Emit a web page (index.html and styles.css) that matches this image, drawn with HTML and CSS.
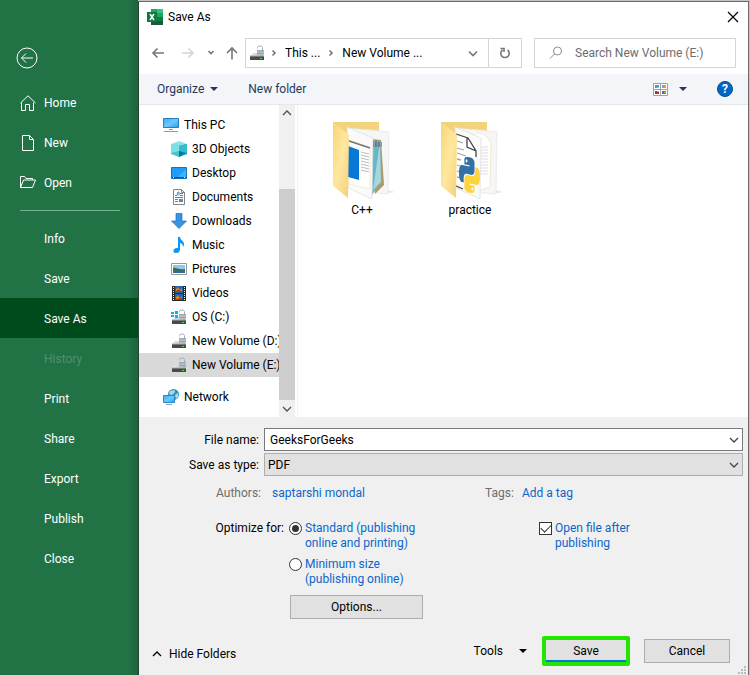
FILE: index.html
```html
<!DOCTYPE html>
<html lang="en">
<head>
<meta charset="utf-8">
<title>Save As</title>
<link rel="stylesheet" href="styles.css">
</head>
<body>
<svg class="defs" aria-hidden="true">
  <defs>
    <linearGradient id="screen" x1="0" y1="0" x2="1" y2="1"><stop offset="0" stop-color="#3fa9f5"/><stop offset=".5" stop-color="#6cc8ff"/><stop offset="1" stop-color="#2d9cf0"/></linearGradient>
    <linearGradient id="flap" x1="0" y1="0" x2="1" y2="1"><stop offset="0" stop-color="#f6d775"/><stop offset=".5" stop-color="#ffe79f"/><stop offset="1" stop-color="#f3d077"/></linearGradient>
    <linearGradient id="metal" x1="0" y1="0" x2="1" y2="0"><stop offset="0" stop-color="#eeeeee"/><stop offset="1" stop-color="#b5b8ba"/></linearGradient>
    <symbol id="drive" viewBox="0 0 16 16">
      <path d="M3.500 8h10l1.500 3.500H1z" fill="url(#metal)"/>
      <path d="M1 11h14v4H1z" fill="#4a4a4a"/><path d="M1 10.500h14v1H1z" fill="#a8a8a8"/>
      <path d="M11 13h2v1h-2z" fill="#35e04a"/>
      <path d="M8.500 3.500V2.500q0-1.500 2.500-1.500t2.500 1.500V5" fill="none" stroke="#a5afb5"/>
      <path d="M8 5h7v4.500H8z" fill="#9daab2"/><path d="M8 6.500h7v1H8z" fill="#c4ced3"/>
    </symbol>
    <symbol id="chevron" viewBox="0 0 10 10"><path d="M1 3l4 4 4-4" fill="none" stroke="currentColor" stroke-width="1.300"/></symbol>
    <symbol id="folder-back" viewBox="0 0 64 80">
      <path d="M52 74l13-2-8-2z" fill="#e8e8e8"/>
      <path d="M3 2h46v60H3z" fill="#f3d27c"/>
      <path d="M34 9l14 1v3l-14 4z" fill="#ffe9b0"/>
      <path d="M20 8l39 4-1 62-23-2z" fill="#f6f6f6" stroke="#e0e0e0" stroke-width=".6"/>
    </symbol>
    <path id="snake" d="M14.250.18l.9.2.73.26.59.3.45.32.34.34.25.34.16.33.1.3.04.26.02.2-.01.13V8.500l-.05.63-.13.55-.21.46-.26.38-.3.31-.33.25-.35.19-.35.14-.33.1-.3.07-.26.04-.21.02H8.770l-.69.05-.59.14-.5.22-.41.27-.33.32-.27.35-.2.36-.15.37-.1.35-.07.32-.04.27-.02.21v3.060H3.170l-.21-.03-.28-.07-.32-.12-.35-.18-.36-.26-.36-.36-.35-.46-.32-.59-.28-.73-.21-.88-.14-1.050-.05-1.230.06-1.220.16-1.040.24-.87.32-.71.36-.57.4-.44.42-.33.42-.24.4-.16.36-.1.32-.05.24-.01h.16l.06.01h8.160v-.83H6.180l-.01-2.750-.02-.37.05-.34.11-.31.17-.28.25-.26.31-.23.38-.2.44-.18.51-.15.58-.12.64-.1.71-.06.77-.04.84-.02 1.270.05zm-6.300 1.980l-.23.33-.08.41.08.41.23.34.33.22.41.09.41-.09.33-.22.23-.34.08-.41-.08-.41-.23-.33-.33-.22-.41-.09-.41.09z"/>
  </defs>
</svg>
<div class="app">
  <nav class="sidebar" aria-label="File">
    <button class="back" type="button" aria-label="Back"><svg width="22" height="22" viewBox="0 0 22 22"><circle cx="11" cy="11" r="10"/><path d="M17 11H5.500M10 6.500L5.500 11l4.500 4.500"/></svg></button>
    <a class="side-item" href="#"><svg width="16" height="16" viewBox="0 0 16 16"><path d="M.5 8L8 .8 15.500 8M1.500 7.500v8h4v-6h4v6h4v-8"/></svg>Home</a>
    <a class="side-item" href="#"><svg width="16" height="16" viewBox="0 0 16 16"><path d="M2.500.5h7l4 4v11h-11zM9.500.5v4h4"/></svg>New</a>
    <a class="side-item" href="#"><svg width="16" height="16" viewBox="0 0 16 16"><path d="M.5 12.500v-11h4l1.500 2h6.500V5M.5 12.500l3-7.500h12l-3 7.500z"/></svg>Open</a>
    <hr class="side-rule">
    <a class="side-item" href="#">Info</a>
    <a class="side-item" href="#">Save</a>
    <a class="side-item active" href="#">Save As</a>
    <a class="side-item disabled" aria-disabled="true">History</a>
    <a class="side-item" href="#">Print</a>
    <a class="side-item" href="#">Share</a>
    <a class="side-item" href="#">Export</a>
    <a class="side-item" href="#">Publish</a>
    <a class="side-item" href="#">Close</a>
  </nav>

  <main class="dialog">
    <header class="titlebar">
      <svg width="16" height="16" viewBox="0 0 16 16"><path d="M4 0h6v4H4z" fill="#21a366"/><path d="M10 0h6v4h-6z" fill="#33c481"/><path d="M4 4h6v4H4z" fill="#107c41"/><path d="M10 4h6v4h-6z" fill="#21a366"/><path d="M4 8h6v8H4z" fill="#185c37"/><path d="M10 8h6v4h-6z" fill="#107c41"/><path d="M10 12h6v4h-6z" fill="#185c37"/><path d="M0 3h10v10H0z" fill="#0b7a3e"/><path d="M3 5l4 6M7 5l-4 6" stroke="#fff" stroke-width="1.500"/></svg>
      <span>Save As</span>
      <button class="close" type="button" aria-label="Close"><svg width="12" height="12" viewBox="0 0 12 12"><path d="M1 1l10 10M11 1L1 11" stroke="#000" stroke-width="1.200"/></svg></button>
    </header>

    <div class="navbar">
      <button class="nav-btn" type="button" aria-label="Back"><svg width="14" height="14" viewBox="0 0 14 14"><path d="M13 7H2M6.500 2.500L2 7l4.500 4.500"/></svg></button>
      <button class="nav-btn faded" type="button" aria-label="Forward"><svg width="14" height="14" viewBox="0 0 14 14"><path d="M1 7h11M7.500 2.500L12 7l-4.500 4.500"/></svg></button>
      <button class="nav-btn small" type="button" aria-label="Recent"><svg width="8" height="14" viewBox="0 0 8 14"><path d="M1.500 5l2.500 2.500L6.500 5"/></svg></button>
      <button class="nav-btn" type="button" aria-label="Up"><svg width="14" height="14" viewBox="0 0 14 14"><path d="M7 13.500V2M2 7l5-5 5 5"/></svg></button>
      <div class="address">
        <svg width="16" height="16"><use href="#drive"/></svg>
        <svg class="crumb-arrow" width="6" height="8" viewBox="0 0 6 8"><path d="M1.500 1.500L4 4 1.500 6.500"/></svg>
        <span class="crumb-pc">This ...</span>
        <svg class="crumb-arrow" width="6" height="8" viewBox="0 0 6 8"><path d="M1.500 1.500L4 4 1.500 6.500"/></svg>
        <span>New Volume ...</span>
        <button class="address-drop" type="button" aria-label="Previous locations"><svg width="10" height="10" viewBox="0 0 10 10"><path d="M1 3.500l4 4 4-4"/></svg></button>
        <button class="refresh" type="button" aria-label="Refresh"><svg width="12" height="12" viewBox="0 0 12 12"><path d="M8.500 3a4.200 4.200 0 1 1-5 0M1.500 1.500h3.500v3.500"/></svg></button>
      </div>
      <label class="search"><svg width="14" height="14" viewBox="0 0 14 14"><circle cx="8.500" cy="5" r="4"/><path d="M5.500 8L1 12.500"/></svg><input type="search" aria-label="Search" placeholder="Search New Volume (E:)"></label>
    </div>

    <div class="toolbar">
      <button type="button">Organize <i class="caret"></i></button>
      <button type="button">New folder</button>
      <button class="view" type="button" aria-label="Change your view"><svg width="15" height="13" viewBox="0 0 15 13"><path d="M.5.5h14v12H.5zM7.500.5v12M.5 6.500h14" fill="#fff" stroke="#a0a0a0"/><path d="M2 2h4v3H2z" fill="#4999d2"/><path d="M9 2h4v3H9z" fill="#79a5c9"/><path d="M2 8h4v3H2z" fill="#b42d20"/><path d="M9 8h4v3H9z" fill="#337ab4"/><path d="M4 4h2v1H4zM11 3h2v1h-2zM4 8h2v1H4zM11 9h2v1h-2z" fill="#d8b640"/></svg><i class="caret"></i></button>
      <button class="help" type="button" aria-label="Help">?</button>
    </div>

    <div class="browser">
      <div class="tree">
        <a class="node root" href="#"><svg width="16" height="16" viewBox="0 0 16 16"><path d="M.5 1.500h15v9H.5z" fill="url(#screen)" stroke="#287eb8"/><path d="M6 12h4v1H6zM1 14h14v1H1z" fill="#8999a8"/></svg>This PC</a>
        <a class="node" href="#"><svg width="16" height="16" viewBox="0 0 16 16"><path d="M0 3l8-3 8 3-8 3z" fill="#8be3ea"/><path d="M0 3l8 2v11l-8-3z" fill="#44c3d0"/><path d="M16 3L8 5v11l8-3z" fill="#0795b5"/><path d="M0 3l8 2v5l-8 2z" fill="#7edfe6"/><path d="M8 5l8-2v9l-8-2z" fill="#35bccd"/><path d="M8 10l5 2-5 4z" fill="#077493"/></svg>3D Objects</a>
        <a class="node" href="#"><svg width="16" height="16" viewBox="0 0 16 16"><path d="M.5 2.500h15v11H.5z" fill="#1e9cfb" stroke="#1574b5"/><path d="M7 12l8-8v8z" fill="#44b0ff"/><path d="M1 12h14v1H1z" fill="#164e7a"/><path d="M2 12h1v1H2zM13 12h1v1h-1z" fill="#fff"/></svg>Desktop</a>
        <a class="node" href="#"><svg width="16" height="16" viewBox="0 0 16 16"><path d="M2.500.5h8l3 3v12h-11z" fill="#fff" stroke="#858585"/><path d="M10.500.5v3h3" fill="none" stroke="#858585"/><path d="M4 6.500h2L7 3h1v3.500M9 4.500h3M9 6.500h3M4 8.500h8M4 10.500h3M4 12.500h3" fill="none" stroke="#398ac8"/><path d="M8 10h4v3H8z" fill="#4a91b9"/></svg>Documents</a>
        <a class="node" href="#"><svg width="16" height="16" viewBox="0 0 16 16"><path d="M5 .5h6V8h4.500L8 15.500.5 8H5z" fill="#3793e5" stroke="#246eaf" stroke-width=".7"/></svg>Downloads</a>
        <a class="node" href="#"><svg width="16" height="16" viewBox="0 0 16 16"><path d="M7 0h2c0 3 4 4 4 7 0 2-1 3-1 3 0-3-2-4-3-4v6.500C9 15 7 16 5 16c-4 0-3-5 1-5h1z" fill="#0796f5"/></svg>Music</a>
        <a class="node" href="#"><svg width="16" height="16" viewBox="0 0 16 16"><path d="M.5 2.500h15v11H.5z" fill="#fff" stroke="#999"/><path d="M2 4h12v8H2z" fill="#8cc9ef"/><path d="M2 7c3-1 5 2 12 1v2H2z" fill="#37705a"/><path d="M2 10h12v2H2z" fill="#316c9d"/></svg>Pictures</a>
        <a class="node" href="#"><svg width="16" height="16" viewBox="0 0 16 16"><path d="M1 1h14v15H1z" fill="#282828"/><path d="M4 1h8v7H4zM4 9h8v6H4z" fill="#2464a8"/><path d="M5 4l2-2 2 3 2-2v3H5zM5 12l2-2 2 3 2-2v3H5z" fill="#d6841f"/><path d="M6 5h3v1H6zM8 13h3v1H8z" fill="#ad2c29"/><path d="M2.500 2v14M13.500 2v14" stroke="#eee" stroke-dasharray="1 1"/></svg>Videos</a>
        <a class="node" href="#"><svg width="16" height="16" viewBox="0 0 16 16"><use href="#drive" width="16" height="16"/><path d="M0 3h3v2H0zM4 2h3v3H4zM0 6h3v2H0zM4 6h3v3H4z" fill="#00b3f5"/></svg>OS (C:)</a>
        <a class="node" href="#"><svg width="16" height="16"><use href="#drive"/></svg>New Volume (D:)</a>
        <a class="node selected" href="#"><svg width="16" height="16"><use href="#drive"/></svg>New Volume (E:)</a>
        <a class="node root network" href="#"><svg width="16" height="16" viewBox="0 0 16 16"><circle cx="10.500" cy="5.500" r="5.500" fill="#3c91b8"/><path d="M7 2l4-1 1 2-3 3-3-1zM12 6l3-2v4l-2 2z" fill="#a9dce8"/><path d="M.5 6.500h11v7H.5z" fill="url(#screen)" stroke="#238bc6"/><path d="M3 15h6v1H3z" fill="#8aa5b5"/></svg>Network</a>
      </div>
      <div class="scrollbar">
        <button class="flip" type="button" aria-label="Scroll up"><svg width="10" height="10"><use href="#chevron"/></svg></button>
        <div class="track"><div class="thumb"></div></div>
        <button type="button" aria-label="Scroll down"><svg width="10" height="10"><use href="#chevron"/></svg></button>
      </div>
      <div class="files">
        <button class="file" type="button">
          <svg width="64" height="80" viewBox="0 0 64 80"><use href="#folder-back" width="64" height="80"/><path d="M42 19l9 1 3 45-9 9z" fill="#b49865"/><path d="M41 22l9-2 1 42-9 13z" fill="#66b7c7"/><path d="M50 22l-7 48 8-8z" fill="#a6d7dc"/><path d="M42 21l10 1v5H42z" fill="#84a5ae"/><path d="M43 21v6M46 21v6M49 22v5" stroke="#425d68"/><path d="M17 7l26 11-1 61-24-11z" fill="#fafafa" stroke="#ddd" stroke-width=".7"/><path d="M19 20l21 7v42l-21-5z" fill="#fff" stroke="#f3ddb0" stroke-width=".6"/><path d="M19 21l21 7" stroke="#777" stroke-width="1.500"/><path d="M18 26l11 4v30l-11-3z" fill="#0878d5"/><path d="M31 32l8 2M31 35l8 2M31 38l8 2M31 41l8 2M31 44l8 2M31 47l8 2M31 50l8 2" stroke="#aaa" stroke-width=".8"/><path d="M3 2l16 13-1 63L3 66z" fill="url(#flap)"/></svg>
          <span>C++</span>
        </button>
        <button class="file" type="button">
          <svg width="64" height="80" viewBox="0 0 64 80"><use href="#folder-back" width="64" height="80"/><path d="M38 13l8 1 7 8-1 45-12 4" fill="#fff" stroke="#f0dfb5" stroke-width=".7"/><path d="M43 27h7M43 30h7M43 33h7M43 36h7M43 39h7M43 42h7M43 45h7M43 48h7M43 51h7M43 54h7" stroke="#ddd"/><path d="M17 7l26 11-1 61-24-11z" fill="#fafafa" stroke="#ddd" stroke-width=".7"/><path d="M18 14l14 4 6 12v40l-20-6" fill="#fff"/><path d="M18 14l12 4 8 13v6M29 18v9l9 4M18 66l7 3" fill="none" stroke="#454545" stroke-width="1.300"/><path d="M19 21l6 2M19 28l7 2M19 33l9 3M19 39l4 1M19 45l3 1M19 51l3 1M19 57l4 1" stroke="#a5a5a5" stroke-width="1.300"/><g transform="translate(21 35) scale(.87 1.480) skewY(7)"><use href="#snake" fill="#3471a3"/><use href="#snake" fill="#ffd33d" transform="rotate(180 12 12)"/></g><path d="M3 2l16 13-1 63L3 66z" fill="url(#flap)"/></svg>
          <span>practice</span>
        </button>
      </div>
    </div>

    <form class="panel">
      <div class="fields">
        <label for="name">File name:</label>
        <div class="combo"><input id="name" type="text" value="GeeksForGeeks"><svg width="10" height="10"><use href="#chevron"/></svg></div>
        <label for="type">Save as type:</label>
        <div class="combo"><select id="type"><option>PDF</option></select><svg width="10" height="10"><use href="#chevron"/></svg></div>
      </div>
      <div class="meta">
        <span class="meta-label">Authors:</span><a href="#">saptarshi mondal</a>
        <span class="meta-label">Tags:</span><a href="#">Add a tag</a>
      </div>
      <div class="options">
        <span class="options-label">Optimize for:</span>
        <div class="choices">
          <label class="choice"><input type="radio" name="optimize" checked><span>Standard (publishing<br>online and printing)</span></label>
          <label class="choice"><input type="radio" name="optimize"><span>Minimum size<br>(publishing online)</span></label>
          <button class="button" type="button">Options...</button>
        </div>
        <label class="choice after"><input type="checkbox" checked><span>Open file after<br>publishing</span></label>
      </div>
      <div class="footer">
        <button class="hide" type="button"><svg width="10" height="10"><use href="#chevron"/></svg>Hide Folders</button>
        <button class="tools" type="button">Tools <i class="caret"></i></button>
        <button class="button save" type="button">Save</button>
        <button class="button cancel" type="button">Cancel</button>
      </div>
      <svg class="grip" width="8" height="8" viewBox="0 0 8 8"><path d="M6 0h2v2H6zM3 3h2v2H3zM6 3h2v2H6zM0 6h2v2H0zM3 6h2v2H3zM6 6h2v2H6z" fill="#bbb"/></svg>
    </form>
  </main>
</div>
</body>
</html>
```
FILE: styles.css
```css
* { box-sizing: border-box; }

body {
  margin: 0;
  background: #c3c3c3;
  color: #000;
  font: 12px/16px Roboto, "Open Sans", sans-serif;
}

button, input, select { font: inherit; color: inherit; }
button { padding: 0; border: 0; background: none; }
a { color: inherit; text-decoration: none; }
svg { display: block; flex: none; }
.defs { position: absolute; width: 0; height: 0; }

.app {
  display: grid;
  grid-template-columns: 138px 1fr;
  min-height: 100vh;
  padding-right: 1px;
}

/* Green file menu */
.sidebar {
  padding-top: 47px;
  background: linear-gradient(to right, transparent 92%, #0002) #217346;
  color: #fff;
}
.back { display: block; margin: 0 0 14px 16px; }
.sidebar svg { fill: none; stroke: #fff; stroke-width: 1; }
.side-item {
  display: flex;
  align-items: center;
  gap: 8px;
  height: 40px;
  padding-left: 20px;
}
.side-rule {
  height: 1px;
  margin: 7px 18px 7px 20px;
  border: 0;
  background: #73b48e;
}
.side-rule ~ .side-item { padding-top: 2px; padding-left: 44px; }
.active { background: #004b1c; }
.disabled { color: #4f9069; }

/* Dialog window */
.dialog {
  display: flex;
  flex-direction: column;
  min-width: 0;
  margin-top: 1px;
  border: 1px solid #6b6b6b;
  border-left-color: #234333;
  border-bottom: 0;
  background: #fff;
}
.titlebar {
  display: flex;
  align-items: center;
  gap: 5px;
  height: 29px;
  padding: 0 9px 0 8px;
}
.close { margin-left: auto; }

.navbar {
  display: flex;
  align-items: center;
  height: 43px;
  padding: 0 12px;
}
.nav-btn { margin-right: 16px; }
.nav-btn.faded { margin-right: 12px; opacity: .3; }
.nav-btn.small { margin-right: 10px; }
.nav-btn:nth-child(4) { margin-right: 6px; }
.nav-btn svg, .crumb-arrow, .address-drop svg, .refresh svg {
  fill: none;
  stroke: #777;
  stroke-width: 1.6;
}
.address, .search {
  display: flex;
  align-items: center;
  height: 30px;
  border: 1px solid #d5d5d5;
}
.address { flex: 1; padding-left: 3px; white-space: nowrap; }
.search { width: 202px; margin-left: 12px; padding-left: 14px; gap: 12px; }
.crumb-arrow { margin: 0 8px 0 6px; }
.crumb-pc { margin-right: 2px; }
.address-drop { margin: 0 10px 0 auto; }
.refresh {
  display: grid;
  place-items: center;
  width: 33px;
  height: 28px;
  border-left: 1px solid #d5d5d5;
}
.search svg { fill: none; stroke: #8d8d8d; }
.search input {
  flex: 1;
  min-width: 0;
  padding: 0;
  border: 0;
  outline: 0;
  appearance: none;
  background: none;
}
.search input::placeholder { color: #6d6d6d; }

.toolbar {
  display: flex;
  align-items: center;
  height: 31px;
  padding: 0 15px 0 18px;
  gap: 30px;
  border-bottom: 1px solid #e5e6ea;
  background: #f4f5f8;
  color: #1e395b;
}
.toolbar button { display: flex; align-items: center; gap: 6px; }
.toolbar .view { gap: 11px; margin-left: auto; }
.caret {
  border: 4px solid transparent;
  border-top-color: currentColor;
  border-bottom: 0;
}
.toolbar .help {
  justify-content: center;
  width: 16px;
  height: 16px;
  border: 1px solid #064d91;
  border-radius: 50%;
  background: #0067c5;
  color: #fff;
  font-weight: bold;
}

.browser { display: flex; height: 312px; }
.tree {
  width: 140px;
  padding-top: 8px;
  overflow: hidden;
}
.node {
  display: flex;
  align-items: center;
  gap: 5px;
  height: 24px;
  padding-left: 32px;
  white-space: nowrap;
}
.root { padding-left: 24px; }
.selected { background: #d9d9d9; }
.network { margin-top: 8px; }
.scrollbar {
  display: flex;
  flex-direction: column;
  width: 16px;
  background: #f0f0f0;
  color: #505050;
}
.scrollbar button { display: grid; place-items: center; height: 17px; }
.flip { transform: scaleY(-1); }
.track { display: flex; flex: 1; align-items: flex-end; }
.thumb { width: 100%; height: 76%; background: #cdcdcd; }
.files {
  display: flex;
  flex: 1;
  align-items: flex-start;
  margin-left: 2px;
  padding: 15px 0 0 10px;
  border-left: 1px solid #f3f3f3;
}
.file {
  display: flex;
  flex-direction: column;
  align-items: center;
  gap: 2px;
  width: 108px;
}

/* File details and actions */
.panel {
  position: relative;
  display: flex;
  flex: 1;
  flex-direction: column;
  padding: 11px 5px 9px 13px;
  background: #f0f0f0;
}
.fields {
  display: grid;
  grid-template-columns: 107px 1fr;
  align-items: center;
  gap: 2px 5px;
}
.fields label { text-align: right; }
.combo { position: relative; }
.combo input, .combo select {
  display: block;
  width: 100%;
  height: 23px;
  padding: 0 20px 0 5px;
  border: 1px solid #7a7a7a;
  border-radius: 0;
  outline: 0;
  appearance: none;
  background: #fff;
}
.combo select { padding-left: 3px; border-color: #adadad; background: #e1e1e1; }
.combo svg { position: absolute; top: 7px; right: 4px; color: #444; }
.meta {
  display: grid;
  grid-template-columns: 109px 1fr 26px 221px;
  column-gap: 11px;
  margin-top: 9px;
}
.meta-label { color: #6d6d6d; text-align: right; white-space: nowrap; }
.meta a, .choice { color: #0b66cc; }
.options {
  display: grid;
  grid-template-columns: 132px 1fr 204px;
  column-gap: 5px;
  margin-top: 20px;
  line-height: 15px;
}
.options-label { text-align: right; }
.choices { display: grid; justify-items: start; gap: 6px; }
.choice { display: flex; align-items: flex-start; gap: 3px; }
.choice input {
  display: grid;
  place-items: center;
  flex: none;
  width: 13px;
  height: 13px;
  margin: 1px 0;
  border: 1px solid #333;
  appearance: none;
  background: #fff;
}
.choice input[type="radio"] { border-radius: 50%; }
.choice input[type="radio"]:checked::before {
  width: 7px;
  height: 7px;
  border-radius: 50%;
  background: #333;
  content: "";
}
.choice input[type="checkbox"]:checked::before {
  width: 9px;
  height: 5px;
  margin-bottom: 3px;
  border: solid #333;
  border-width: 0 0 1px 1px;
  transform: rotate(-45deg);
  content: "";
}
.button {
  height: 24px;
  border: 1px solid #adadad;
  background: #e1e1e1;
}
.choices .button { width: 133px; margin: 2px 0 0 1px; }
.footer {
  display: flex;
  align-items: center;
  margin-top: auto;
  padding-right: 13px;
}
.hide {
  display: flex;
  align-items: center;
  gap: 7px;
  margin: 6px auto 0 0;
}
.hide svg { transform: scaleY(-1); }
.tools { display: flex; align-items: center; gap: 16px; margin-right: 15px; }
.save {
  width: 88px;
  height: 30px;
  margin-right: 14px;
  border: 4px solid #24e500;
  border-radius: 2px;
  box-shadow: inset 0 -2px #0078d7;
}
.cancel { width: 86px; }
.grip { position: absolute; right: 2px; bottom: 1px; }
```
